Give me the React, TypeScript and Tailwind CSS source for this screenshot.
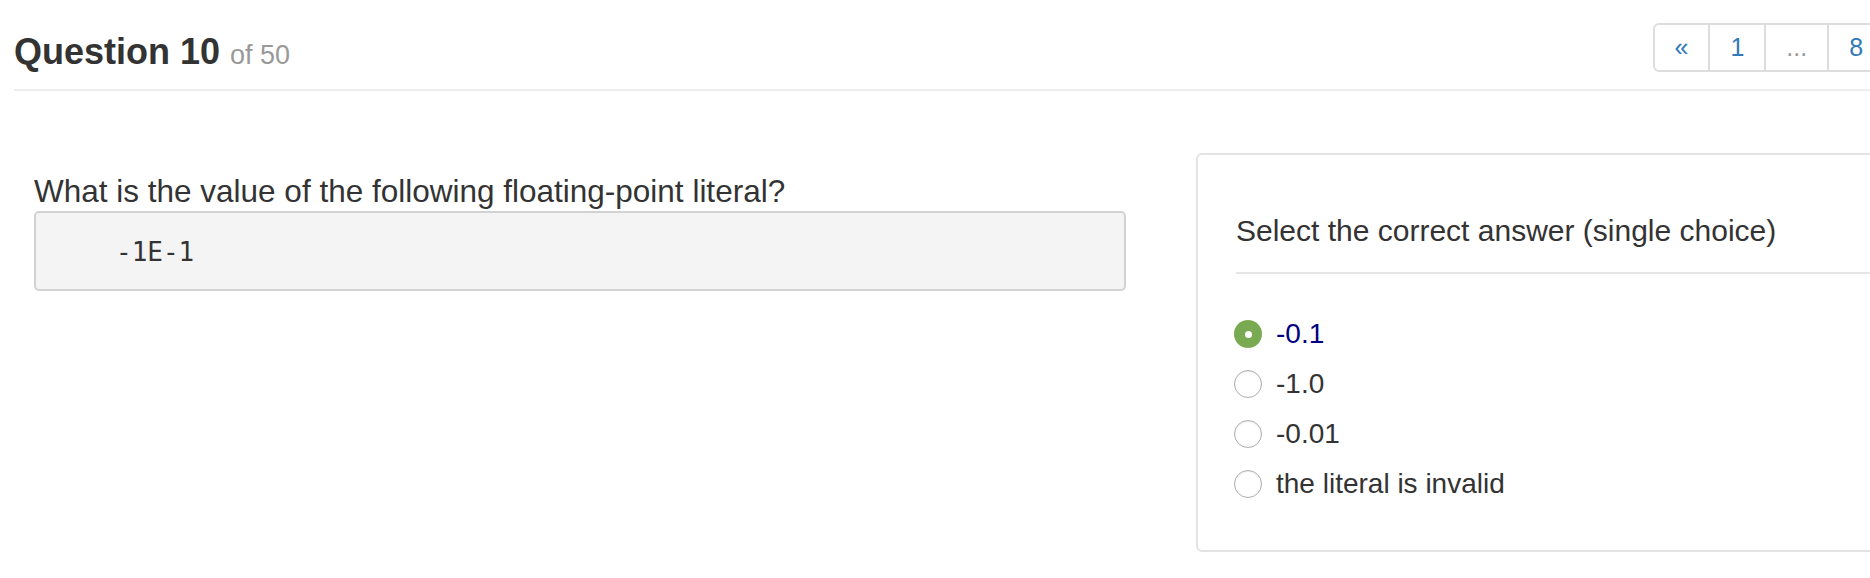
const options = [
  { label: "-0.1", selected: true },
  { label: "-1.0", selected: false },
  { label: "-0.01", selected: false },
  { label: "the literal is invalid", selected: false },
];

const pages = ["«", "1", "...", "8", "»"];

function Radio({ selected }: { selected: boolean }) {
  if (selected) {
    return (
      <span className="flex h-[28px] w-[28px] shrink-0 items-center justify-center rounded-full bg-[#79aa52]">
        <span className="h-[7px] w-[7px] rounded-full bg-white" />
      </span>
    );
  }
  return (
    <span className="h-[28px] w-[28px] shrink-0 rounded-full border border-[#adadad] bg-white shadow-[inset_0_1px_2px_rgba(0,0,0,0.08)]" />
  );
}

export default function App() {
  return (
    <div className="h-[578px] w-[1870px] overflow-hidden bg-white font-['Liberation_Sans',Arial,sans-serif] text-[#333]">
      <div className="w-[1955px] px-[14px]">
        <header className="flex items-start justify-between pt-[23px]">
          <h1 className="mt-[9px] text-[36px] font-bold leading-[40px]">
            Question 10{" "}
            <small className="text-[27px] font-normal leading-none text-[#999]">of 50</small>
          </h1>
          <nav className="flex h-[49px] rounded-[6px] border-2 border-[#ddd]">
            {pages.map((p, i) => (
              <span
                key={i}
                className={
                  "flex items-center px-[20px] text-[25px] " +
                  (i > 0 ? "border-l-2 border-[#ddd] " : "") +
                  (p === "..." ? "text-[#999]" : "text-[#337ab7]")
                }
              >
                {p}
              </span>
            ))}
          </nav>
        </header>
        <div className="mt-[17px] h-[2px] bg-[#eee]" />

        <div className="flex items-start">
          <div className="ml-[20px] mt-[82px] w-[1092px]">
            <p className="text-[31.5px] leading-[36px]">
              What is the value of the following floating-point literal?
            </p>
            <pre className="mt-[2px] h-[80px] rounded-[5px] border-2 border-[#d2d2d2] bg-[#f4f4f4] pl-[80px] pt-[24px] font-['DejaVu_Sans_Mono',monospace] text-[26px] leading-[30px]">
              -1E-1
            </pre>
          </div>

          <div className="ml-[70px] mt-[62px] h-[399px] flex-1 rounded-[6px] border-2 border-[#e3e3e3]">
            <p className="pl-[38px] pt-[59px] text-[30px] leading-[34px]">
              Select the correct answer (single choice)
            </p>
            <div className="ml-[38px] mt-[24px] h-[2px] bg-[#e6e6e6]" />
            <ul className="mt-[35px] pl-[36px]">
              {options.map((o) => (
                <li key={o.label} className="flex h-[50px] items-center gap-[14px]">
                  <Radio selected={o.selected} />
                  <span
                    className={
                      "text-[28px] leading-[32px] " +
                      (o.selected ? "text-[#000080]" : "text-[#333]")
                    }
                  >
                    {o.label}
                  </span>
                </li>
              ))}
            </ul>
          </div>
        </div>
      </div>
    </div>
  );
}
